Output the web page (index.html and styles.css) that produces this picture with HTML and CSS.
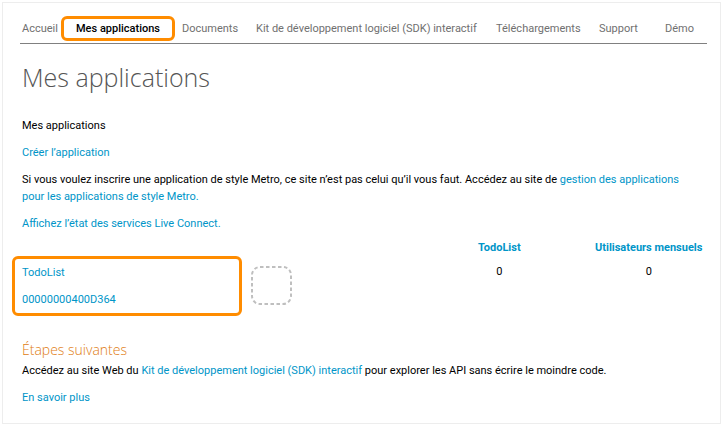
FILE: index.html
```html
<!DOCTYPE html>
<html lang="fr">
<head>
<meta charset="utf-8">
<title>Mes applications</title>
<link rel="stylesheet" href="styles.css">
</head>
<body>
<div class="page">
  <nav class="nav">
    <a class="nav-link" href="#">Accueil</a>
    <a class="nav-link current" href="#" aria-current="page">Mes applications</a>
    <a class="nav-link" href="#">Documents</a>
    <a class="nav-link" href="#">Kit de développement logiciel (SDK) interactif</a>
    <a class="nav-link" href="#">Téléchargements</a>
    <a class="nav-link" href="#">Support</a>
    <a class="nav-link" href="#">Démo</a>
  </nav>
  <main class="content">
    <h1 class="title">Mes applications</h1>
    <p class="text">Mes applications</p>
    <p class="text"><a href="#">Créer l’application</a></p>
    <p class="text">Si vous voulez inscrire une application de style Metro, ce site n’est pas celui qu’il vous faut. Accédez au site de <a href="#">gestion des applications<br>pour les applications de style Metro.</a></p>
    <p class="text"><a href="#">Affichez l’état des services Live Connect.</a></p>
    <section class="apps">
      <div class="app-box">
        <a href="#">TodoList</a>
        <a href="#">00000000400D364</a>
      </div>
      <svg class="app-logo" width="41" height="39" viewBox="0 0 41 39" aria-hidden="true">
        <rect x="1" y="1" width="39" height="37" rx="8" fill="none" stroke="#bfbfbf" stroke-width="2" stroke-dasharray="3.5 2.5"/>
      </svg>
      <table class="stats">
        <thead>
          <tr><th><a href="#">TodoList</a></th><th><a href="#">Utilisateurs mensuels</a></th></tr>
        </thead>
        <tbody>
          <tr><td>0</td><td>0</td></tr>
        </tbody>
      </table>
    </section>
    <h2 class="subtitle">Étapes suivantes</h2>
    <p class="text">Accédez au site Web du <a href="#">Kit de développement logiciel (SDK) interactif</a> pour explorer les API sans écrire le moindre code.</p>
    <p class="text"><a href="#">En savoir plus</a></p>
  </main>
</div>
</body>
</html>
```
FILE: styles.css
```css
* {
  box-sizing: border-box;
}

body {
  margin: 0;
  padding: 2px;
  background: #fff;
  color: #000;
  font: 11px/17px Roboto, "Open Sans", sans-serif;
}

a {
  color: #0095c8;
  text-decoration: none;
}

.page {
  padding: 13px 13px 7px 17px;
  border: 1px solid #ededed;
}

.nav {
  display: grid;
  grid-template-columns: 39fr 121fr 74fr 240fr 103fr 66fr 42fr;
  align-items: center;
  padding: 0 0 2px 2px;
  border-bottom: 1px solid #808080;
  white-space: nowrap;
}

.nav-link {
  color: #707070;
}

.nav-link.current {
  margin-right: 7px;
  padding: 1px 0;
  border: 3px solid #ff8c00;
  border-radius: 6px;
  color: #000;
  font-weight: 500;
  text-align: center;
}

.content {
  padding: 0 0 0 2px;
}

.title,
.subtitle {
  font-family: "Open Sans", sans-serif;
  font-weight: 300;
}

.title {
  margin: 14px 0 21px;
  color: #555;
  font-size: 25px;
  line-height: 38px;
}

.text {
  margin: 0 0 10px;
}

.apps {
  display: flex;
  align-items: center;
  margin: -3px 0 22px -10px;
}

.app-box {
  display: flex;
  flex-direction: column;
  gap: 10px;
  width: 230px;
  margin-top: 17px;
  padding: 5px 7px;
  border: 3px solid #ff8c00;
  border-radius: 6px;
}

.app-logo {
  margin: 16px 0 0 9px;
}

.stats {
  width: 43%;
  align-self: flex-start;
  margin-left: auto;
  border-collapse: collapse;
  table-layout: fixed;
  text-align: center;
}

.stats th:first-child {
  width: 61%;
}

.stats th,
.stats td {
  padding: 0 0 7px;
}

.subtitle {
  margin: 0;
  color: #e07b10;
  font-size: 14px;
  line-height: 24px;
}
```
